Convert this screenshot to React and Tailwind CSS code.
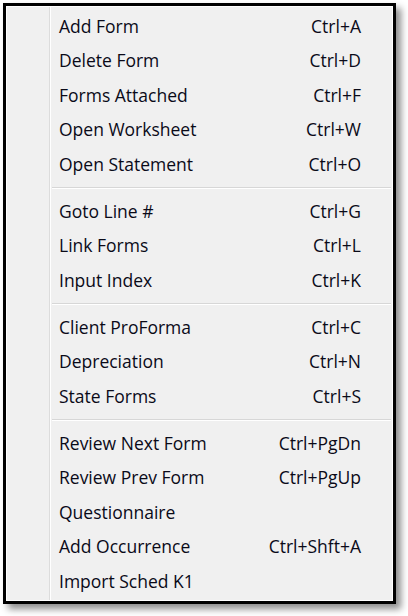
import React from "react";

const groups = [
  [
    ["Add Form", "Ctrl+A"],
    ["Delete Form", "Ctrl+D"],
    ["Forms Attached", "Ctrl+F"],
    ["Open Worksheet", "Ctrl+W"],
    ["Open Statement", "Ctrl+O"],
  ],
  [
    ["Goto Line #", "Ctrl+G"],
    ["Link Forms", "Ctrl+L"],
    ["Input Index", "Ctrl+K"],
  ],
  [
    ["Client ProForma", "Ctrl+C"],
    ["Depreciation", "Ctrl+N"],
    ["State Forms", "Ctrl+S"],
  ],
  [
    ["Review Next Form", "Ctrl+PgDn"],
    ["Review Prev Form", "Ctrl+PgUp"],
    ["Questionnaire", ""],
    ["Add Occurrence", "Ctrl+Shft+A"],
    ["Import Sched K1", ""],
  ],
];

function Row({ label, shortcut }) {
  return (
    <div className="flex h-[34.5px] items-center pl-[53px] pr-[32px]">
      <span className="flex-1">{label}</span>
      <span>{shortcut}</span>
    </div>
  );
}

function Separator() {
  return (
    <div className="flex h-[12.5px] flex-col justify-center pl-[46px] pr-[2px]">
      <div className="h-px bg-[#d7d7d7]" />
      <div className="h-px bg-white" />
    </div>
  );
}

export default function App() {
  return (
    <div className="h-[616px] w-[408px] bg-white pl-[3px] pt-[3px]">
      <div
        className="relative h-[601px] w-[393px] border-[3px] border-black bg-[#f0f0f0] shadow-[5px_5px_7px_rgba(0,0,0,0.45)]"
        style={{ fontFamily: '"Open Sans", "Noto Sans", sans-serif' }}
      >
        <div className="absolute inset-0 border border-white" />
        <div className="absolute bottom-[1px] left-[43px] top-[1px] w-px bg-[#dcdcdc]" />
        <div className="absolute bottom-[1px] left-[44px] top-[1px] w-px bg-white" />
        <div className="relative pt-[3px] text-[17.5px] font-medium leading-none text-[#0a0a18]">
          {groups.map((g, gi) => (
            <React.Fragment key={gi}>
              {gi > 0 && <Separator />}
              {g.map(([l, s]) => (
                <Row key={l} label={l} shortcut={s} />
              ))}
            </React.Fragment>
          ))}
        </div>
      </div>
    </div>
  );
}
